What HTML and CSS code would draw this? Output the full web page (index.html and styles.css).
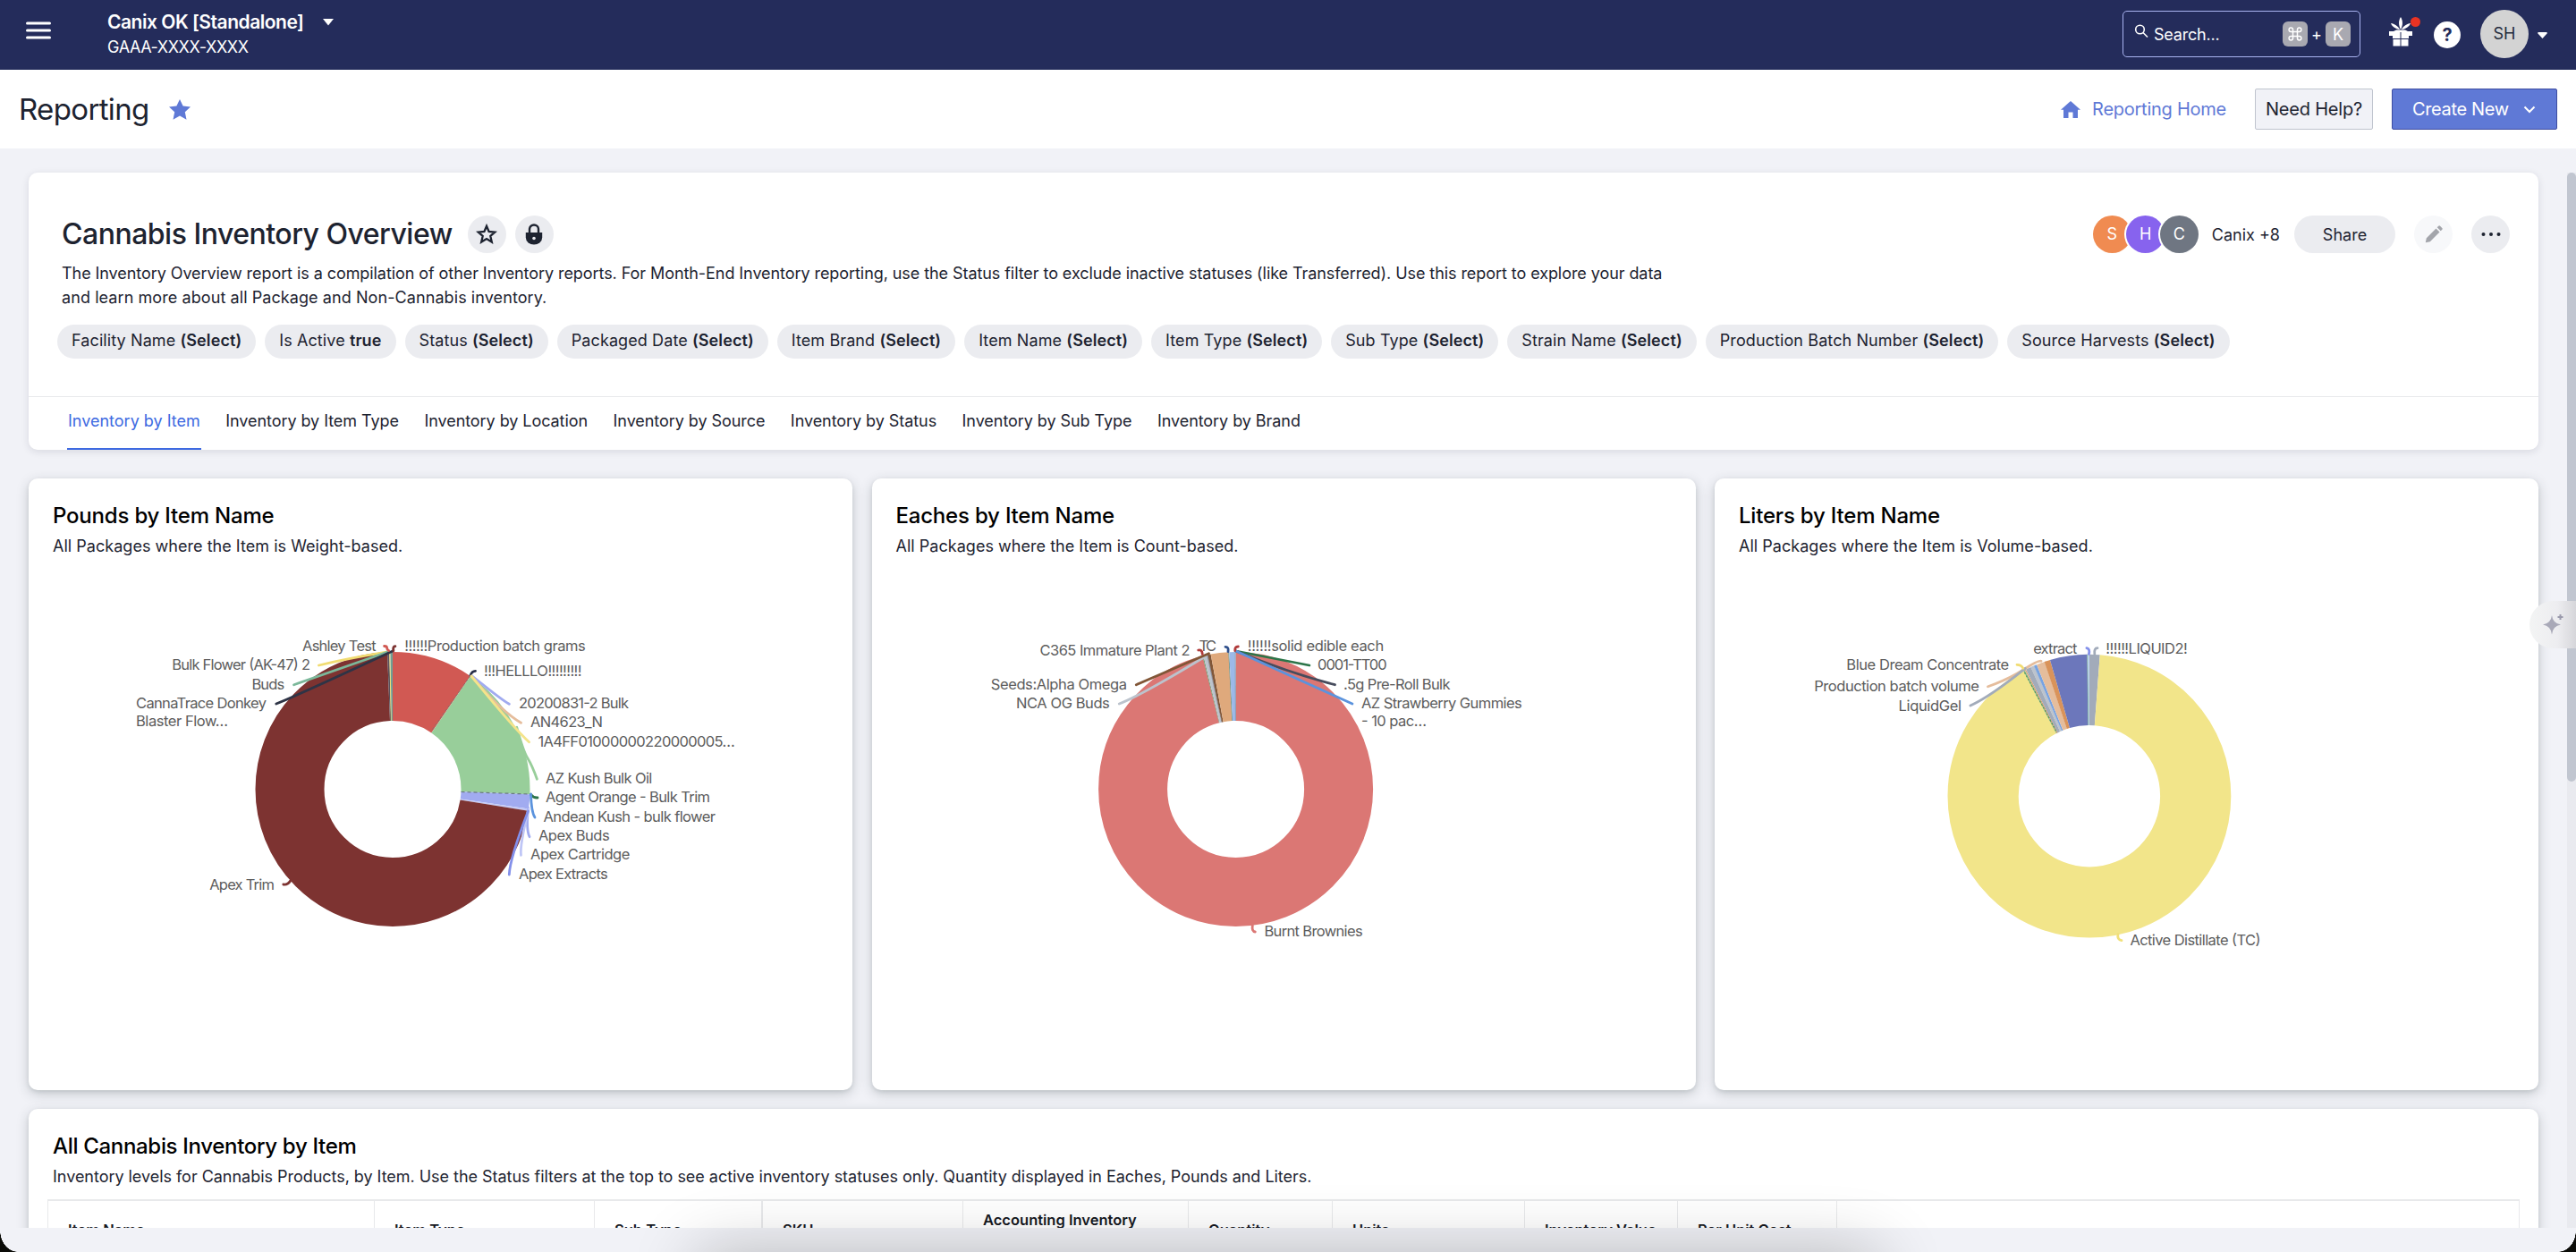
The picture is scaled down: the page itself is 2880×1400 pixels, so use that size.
FILE: index.html
```html
<!doctype html>
<html lang="en">

<head>
	<meta charset="UTF-8" />
	<meta name="viewport" content="width=device-width, initial-scale=1.0" />
	<title>Reporting</title>
	<link rel="stylesheet" href="styles.css">
</head>

<body>
	<header class="topbar">
		<svg class="menu-icon" width="28" height="20" viewBox="0 0 28 20">
			<path d="M1.5 2h25M1.5 10h25M1.5 18h25" stroke="#fff" stroke-width="3" stroke-linecap="round" />
		</svg>
		<div class="facility">
			<div class="facility-name">
				<span>Canix OK [Standalone]</span>
				<svg width="12" height="8" viewBox="0 0 12 8"><path d="M0 0h12L6 7.500z" fill="#fff" /></svg>
			</div>
			<div class="facility-license">GAAA-XXXX-XXXX</div>
		</div>
		<div class="search">
			<svg class="search-icon" width="16" height="16" viewBox="0 0 16 16" fill="none" stroke="#fff" stroke-width="1.600">
				<circle cx="6.500" cy="6" r="4.800" />
				<path d="M10 9.500l5 5" />
			</svg>
			<span class="search-text">Search...</span>
			<kbd>
				<svg width="16" height="16" viewBox="0 0 16 16" fill="none" stroke="#fff" stroke-width="1.500">
					<path d="M5.500 5.500h5v5h-5zM5.500 5.500V3.300a2.200 2.200 0 1 0-2.200 2.200zM10.500 5.500h2.200a2.200 2.200 0 1 0-2.200-2.200zM10.500 10.500v2.200a2.200 2.200 0 1 0 2.200-2.200zM5.500 10.500H3.300a2.200 2.200 0 1 0 2.200 2.200z" />
				</svg>
			</kbd>
			<span class="plus">+</span>
			<kbd>K</kbd>
		</div>
		<div class="gift">
			<svg width="26" height="33" viewBox="0 0 26 33" fill="#fff">
				<path d="M13 0c2.600 4 2.600 9 0 14-2.600-5-2.600-10 0-14z" />
				<path d="M2 7c4 .5 8 3 10 7-4.500-.5-8.500-3-10-7zM24 7c-4 .5-8 3-10 7 4.500-.5 8.500-3 10-7z" />
				<path d="M0 16h5l3-1.500h10l3 1.500h5v5h-4v3h-8.500v-7h-1v7H4v-3H0z" />
				<path d="M4.500 25h8v7.500h-8zM13.500 25h8v7.500h-8z" />
			</svg>
			<span class="gift-dot"></span>
		</div>
		<div class="help">?</div>
		<div class="user">SH</div>
		<svg class="user-caret" width="11" height="7" viewBox="0 0 11 7"><path d="M.8 0h9.400L11 1 5.500 7 0 1z" fill="#fff" /></svg>
	</header>

	<div class="page-header">
		<h1>Reporting</h1>
		<svg class="page-star" width="24" height="23" viewBox="0 0 24 23"><path d="M12 0l3.600 7.600 8.400 1-6.200 5.700 1.700 8.500L12 18.500l-7.500 4.300 1.700-8.500L0 8.600l8.400-1z" fill="#5f79d6" /></svg>
		<a class="home-link">
			<svg width="22" height="19" viewBox="0 0 22 19"><path d="M11 0l11 9.700h-3V19h-5.500v-6.500h-5V19H3V9.700H0z" fill="#5f79d6" /></svg>
			<span>Reporting Home</span>
		</a>
		<button class="btn btn-help">Need Help?</button>
		<button class="btn btn-create">
			<span>Create New</span>
			<svg width="14" height="9" viewBox="0 0 14 9"><path d="M1.500 1.500L7 7l5.500-5.500" fill="none" stroke="#fff" stroke-width="2" /></svg>
		</button>
	</div>

	<main>
		<section class="report-card">
			<div class="report-head">
				<h2>Cannabis Inventory Overview</h2>
				<span class="round">
					<svg width="24" height="24" viewBox="0 0 24 24"><path d="M12 2.800l2.600 6.200 6.700.6-5 4.400 1.500 6.600L12 17.100l-5.800 3.500L7.700 14l-5-4.400 6.700-.6z" fill="none" stroke="#1d2330" stroke-width="2.300" /></svg>
				</span>
				<span class="round">
					<svg width="20" height="24" viewBox="0 0 20 24">
						<path d="M5 11V6.500a5 5 0 0 1 10 0V11" fill="none" stroke="#1d2330" stroke-width="2.400" />
						<path d="M0.800 10h18.400v5.500a9.200 8 0 0 1-18.400 0z" fill="#1d2330" />
						<circle cx="10" cy="16.500" r="1.800" fill="#ebecf0" />
					</svg>
				</span>
				<div class="report-actions">
					<div class="people">
						<span class="person person-s">S</span>
						<span class="person person-h">H</span>
						<span class="person person-c">C</span>
					</div>
					<span class="people-more">Canix +8</span>
					<button class="share">Share</button>
					<span class="round disabled">
						<svg width="20" height="20" viewBox="0 0 20 20" fill="#a3a5ab"><path d="M.8 19.200l1-5L12.500 3.500l4 4L5.800 18.200zM13.700 2.300l1.600-1.600q.9-.8 1.800 0l2.200 2.200q.8.900 0 1.800l-1.600 1.600z" /></svg>
					</span>
					<span class="round">
						<svg width="22" height="6" viewBox="0 0 22 6" fill="#1d2330"><circle cx="2.500" cy="3" r="2" /><circle cx="11" cy="3" r="2" /><circle cx="19.500" cy="3" r="2" /></svg>
					</span>
				</div>
			</div>
			<p class="report-desc">The Inventory Overview report is a compilation of other Inventory reports. For Month-End Inventory reporting, use the Status filter to exclude inactive statuses (like Transferred). Use this report to explore your data<br><span>and learn more about all Package and Non-Cannabis inventory.</span></p>
			<div class="filters">
				<span class="pill">Facility Name <b>(Select)</b></span>
				<span class="pill">Is Active <b>true</b></span>
				<span class="pill">Status <b>(Select)</b></span>
				<span class="pill">Packaged Date <b>(Select)</b></span>
				<span class="pill">Item Brand <b>(Select)</b></span>
				<span class="pill">Item Name <b>(Select)</b></span>
				<span class="pill">Item Type <b>(Select)</b></span>
				<span class="pill">Sub Type <b>(Select)</b></span>
				<span class="pill">Strain Name <b>(Select)</b></span>
				<span class="pill">Production Batch Number <b>(Select)</b></span>
				<span class="pill">Source Harvests <b>(Select)</b></span>
			</div>
			<nav class="tabs">
				<a class="tab active">Inventory by Item</a>
				<a class="tab">Inventory by Item Type</a>
				<a class="tab">Inventory by Location</a>
				<a class="tab">Inventory by Source</a>
				<a class="tab">Inventory by Status</a>
				<a class="tab">Inventory by Sub Type</a>
				<a class="tab">Inventory by Brand</a>
			</nav>
		</section>

		<div class="charts">
			<section class="card chart-card">
				<h3>Pounds by Item Name</h3>
				<p>All Packages where the Item is Weight-based.</p>
				<svg class="chart" viewBox="32 640 921 579">
					<g class="ring" transform="rotate(-90 439 882.500)">
						<circle cx="439" cy="882.500" r="115" pathLength="360" stroke="#d15953" stroke-dasharray="34.500 360" />
						<circle cx="439" cy="882.500" r="115" pathLength="360" stroke="#98ce9a" stroke-dasharray="57.700 360" stroke-dashoffset="-34.500" />
						<circle cx="439" cy="882.500" r="115" pathLength="360" stroke="#a1abf0" stroke-dasharray="6.100 360" stroke-dashoffset="-92.200" />
						<circle cx="439" cy="882.500" r="115" pathLength="360" stroke="#c3c9f6" stroke-dasharray="0.800 360" stroke-dashoffset="-98.300" />
						<circle cx="439" cy="882.500" r="115" pathLength="360" stroke="#7d3331" stroke-dasharray="258.600 360" stroke-dashoffset="-99.100" />
						<circle cx="439" cy="882.500" r="115" pathLength="360" stroke="#59525c" stroke-dasharray="0.900 360" stroke-dashoffset="-357.700" />
						<circle cx="439" cy="882.500" r="115" pathLength="360" stroke="#f1dc72" stroke-dasharray="0.500 360" stroke-dashoffset="-358.500" />
						<circle cx="439" cy="882.500" r="115" pathLength="360" stroke="#6f9f94" stroke-dasharray="1 360" stroke-dashoffset="-359" />
					</g>
					<path d="M525.500 756L482 817.500" stroke="#8a6f6c" stroke-width="1" stroke-dasharray="3 2" />
					<path d="M515.500 885.500l77 2.500" stroke="#6a7a80" stroke-width="1.200" stroke-dasharray="4 3" />
					<g class="leads">
						<path d="M356.400 744Q390 736 435 728.700" stroke="#f1dc72" />
						<path d="M328.600 765.700L434 728.700" stroke="#7bb89a" />
						<path d="M308.800 787Q325 781 439 728" stroke="#2e3446" />
						<path d="M429.600 722.500q3 0 3 2t2 3" stroke="#d15953" />
						<path d="M441.900 722.700q-3 0-2 5" stroke="#7d3331" />
						<path d="M531.500 750.300q-4 0-5.600 5.200" stroke="#262c46" />
						<path d="M528 756Q560 782 569.300 787.300" stroke="#a1abf0" />
						<path d="M527 756Q560 795 582.500 808.300" stroke="#e5bd9c" />
						<path d="M577.800 813.300Q585 840 590 848T600.400 871.300" stroke="#98ce9a" />
						<path d="M527 756Q575 815 591.500 829.700" stroke="#f4e48a" />
						<path d="M593.400 888.300q3 4 7.600 3.700" stroke="#2c7549" />
						<path d="M593.500 888Q594 908 598 914" stroke="#5b93dd" />
						<path d="M590.500 903Q588 928 592 935.700" stroke="#a1abf0" />
						<path d="M591 905Q581 945 582.500 956.300" stroke="#bfc6f6" />
						<path d="M590.500 907Q570 960 569.300 978" stroke="#8390ea" />
						<path d="M324.800 984.700q-3 5-8 4.300" stroke="#7d3331" />
					</g>
					<g class="labels">
						<text x="338" y="728" textLength="82.600">Ashley Test</text>
						<text x="452.200" y="728" textLength="202.500">!!!!!!Production batch grams</text>
						<text x="541" y="756" textLength="109.500">!!!HELLLO!!!!!!!!!</text>
						<text x="192.200" y="749" textLength="154.800">Bulk Flower (AK-47) 2</text>
						<text x="281.400" y="771" textLength="36.800">Buds</text>
						<text x="152" y="792" textLength="146">CannaTrace Donkey</text>
						<text x="152" y="812" textLength="103">Blaster Flow…</text>
						<text x="580" y="792" textLength="123">20200831-2 Bulk</text>
						<text x="593" y="813" textLength="81">AN4623_N</text>
						<text x="601.400" y="835" textLength="220.400">1A4FF01000000220000005…</text>
						<text x="610" y="876" textLength="119.300">AZ Kush Bulk Oil</text>
						<text x="610" y="897" textLength="184">Agent Orange - Bulk Trim</text>
						<text x="607.500" y="919" textLength="192.500">Andean Kush - bulk flower</text>
						<text x="602" y="940" textLength="79.600">Apex Buds</text>
						<text x="593" y="961" textLength="111.300">Apex Cartridge</text>
						<text x="580" y="983" textLength="99.700">Apex Extracts</text>
						<text x="234.200" y="995" textLength="72.800">Apex Trim</text>
					</g>
				</svg>
			</section>

			<section class="card chart-card">
				<h3>Eaches by Item Name</h3>
				<p>All Packages where the Item is Count-based.</p>
				<svg class="chart" viewBox="975 640 921 579">
					<g class="ring" transform="rotate(-90 1381.600 882.500)">
						<circle cx="1381.600" cy="882.500" r="115" pathLength="360" stroke="#db7774" stroke-dasharray="346 360" />
						<circle cx="1381.600" cy="882.500" r="115" pathLength="360" stroke="#7fa37f" stroke-dasharray="0.500 360" stroke-dashoffset="-345.900" />
						<circle cx="1381.600" cy="882.500" r="115" pathLength="360" stroke="#bcc3cd" stroke-dasharray="1.500 360" stroke-dashoffset="-346.400" />
						<circle cx="1381.600" cy="882.500" r="115" pathLength="360" stroke="#8f8f98" stroke-dasharray="0.700 360" stroke-dashoffset="-347.800" />
						<circle cx="1381.600" cy="882.500" r="115" pathLength="360" stroke="#815637" stroke-dasharray="1.200 360" stroke-dashoffset="-348.300" />
						<circle cx="1381.600" cy="882.500" r="115" pathLength="360" stroke="#dfa97c" stroke-dasharray="7.400 360" stroke-dashoffset="-349.500" />
						<circle cx="1381.600" cy="882.500" r="115" pathLength="360" stroke="#5f8c80" stroke-dasharray="0.400 360" stroke-dashoffset="-356.800" />
						<circle cx="1381.600" cy="882.500" r="115" pathLength="360" stroke="#9cb9e8" stroke-dasharray="2.500 360" stroke-dashoffset="-357.200" />
						<circle cx="1381.600" cy="882.500" r="115" pathLength="360" stroke="#6f8fa8" stroke-dasharray="0.400 360" stroke-dashoffset="-359.600" />
					</g>
					<g class="leads">
						<path d="M1251.300 787Q1275 778 1346 735" stroke="#bcc3cd" />
						<path d="M1270.300 765.700L1351.500 730.700" stroke="#815637" />
						<path d="M1381.800 728L1463.900 744" stroke="#2c7549" />
						<path d="M1381.800 728Q1440 752 1492.500 765.700" stroke="#474c5d" />
						<path d="M1381.800 728L1511.900 787" stroke="#5b93dd" />
						<path d="M1339.700 727q4-1 4.600 4.300" stroke="#b03a3a" />
						<path d="M1370 723.300q4 0 3 5.400" stroke="#30508c" />
						<path d="M1384.300 723q-4 0-3.500 4.500" stroke="#b03a3a" />
						<path d="M1400.300 1034.700q-1 7 3 7.300" stroke="#db7774" />
					</g>
					<g class="labels">
						<text x="1162.500" y="733" textLength="168">C365 Immature Plant 2</text>
						<text x="1340.500" y="728" textLength="19.500">TC</text>
						<text x="1394.800" y="728" textLength="152.400">!!!!!!solid edible each</text>
						<text x="1473" y="749" textLength="77.600">0001-TT00</text>
						<text x="1502" y="771" textLength="119.500">.5g Pre-Roll Bulk</text>
						<text x="1522" y="792" textLength="179.700">AZ Strawberry Gummies</text>
						<text x="1522" y="812" textLength="73">- 10 pac…</text>
						<text x="1107.800" y="771" textLength="152.200">Seeds:Alpha Omega</text>
						<text x="1136" y="792" textLength="104.800">NCA OG Buds</text>
						<text x="1413.400" y="1047" textLength="110.200">Burnt Brownies</text>
					</g>
				</svg>
			</section>

			<section class="card chart-card">
				<h3>Liters by Item Name</h3>
				<p>All Packages where the Item is Volume-based.</p>
				<svg class="chart" viewBox="1917 640 921 579">
					<g class="ring wide" transform="rotate(-90 2335.900 890.200)">
						<circle cx="2335.900" cy="890.200" r="118.800" pathLength="360" stroke="#a2abba" stroke-dasharray="4.300 360" />
						<circle cx="2335.900" cy="890.200" r="118.800" pathLength="360" stroke="#f2e58a" stroke-dasharray="328 360" stroke-dashoffset="-4.300" />
						<circle cx="2335.900" cy="890.200" r="118.800" pathLength="360" stroke="#8fb98a" stroke-dasharray="0.700 360" stroke-dashoffset="-332.200" />
						<circle cx="2335.900" cy="890.200" r="118.800" pathLength="360" stroke="#d9935a" stroke-dasharray="0.500 360" stroke-dashoffset="-332.900" />
						<circle cx="2335.900" cy="890.200" r="118.800" pathLength="360" stroke="#a2abba" stroke-dasharray="2.200 360" stroke-dashoffset="-333.400" />
						<circle cx="2335.900" cy="890.200" r="118.800" pathLength="360" stroke="#bcc3cd" stroke-dasharray="1.600 360" stroke-dashoffset="-335.500" />
						<circle cx="2335.900" cy="890.200" r="118.800" pathLength="360" stroke="#77a3e2" stroke-dasharray="1.200 360" stroke-dashoffset="-337" />
						<circle cx="2335.900" cy="890.200" r="118.800" pathLength="360" stroke="#e5bd9c" stroke-dasharray="3.400 360" stroke-dashoffset="-338.200" />
						<circle cx="2335.900" cy="890.200" r="118.800" pathLength="360" stroke="#d9935a" stroke-dasharray="2.400 360" stroke-dashoffset="-341.500" />
						<circle cx="2335.900" cy="890.200" r="118.800" pathLength="360" stroke="#6c77bb" stroke-dasharray="15.300 360" stroke-dashoffset="-343.900" />
						<circle cx="2335.900" cy="890.200" r="118.800" pathLength="360" stroke="#8cbf9b" stroke-dasharray="0.500 360" stroke-dashoffset="-359" />
						<circle cx="2335.900" cy="890.200" r="118.800" pathLength="360" stroke="#b3cdee" stroke-dasharray="0.600 360" stroke-dashoffset="-359.400" />
					</g>
					<path d="M2263.500 752L2299 818" stroke="#4f9a5e" stroke-width="1.200" stroke-dasharray="2 2" />
					<g class="leads">
						<path d="M2222.500 767.700Q2245 760 2262 749T2282 739.300" stroke="#e5bd9c" />
						<path d="M2202.900 789Q2225 779 2264.300 747.300" stroke="#a2abba" />
						<path d="M2255 743.300q5 0 6.800 4" stroke="#f1dc72" />
						<path d="M2332.900 724.700q4 1 2.500 6.600" stroke="#8390ea" />
						<path d="M2345 724.700q-4 0-3.200 6.600" stroke="#a2abba" />
						<path d="M2367.900 1044.700q-1 6 4.100 7" stroke="#f1e07a" />
					</g>
					<g class="labels">
						<text x="2273.200" y="731" textLength="49.300">extract</text>
						<text x="2354.300" y="731" textLength="91.400">!!!!!!LIQUID2!</text>
						<text x="2064.300" y="749" textLength="181.900">Blue Dream Concentrate</text>
						<text x="2028.200" y="773" textLength="184.700">Production batch volume</text>
						<text x="2122.500" y="795" textLength="70.400">LiquidGel</text>
						<text x="2381.400" y="1057" textLength="146.100">Active Distillate (TC)</text>
					</g>
				</svg>
			</section>
		</div>

		<section class="card table-card">
			<h3>All Cannabis Inventory by Item</h3>
			<p>Inventory levels for Cannabis Products, by Item. Use the Status filters at the top to see active inventory statuses only. Quantity displayed in Eaches, Pounds and Liters.</p>
			<div class="table">
				<div class="th">Item Name</div>
				<div class="th">Item Type</div>
				<div class="th pinned">Sub Type</div>
				<div class="th">SKU</div>
				<div class="th">Accounting Inventory Name</div>
				<div class="th">Quantity</div>
				<div class="th">Units</div>
				<div class="th">Inventory Value</div>
				<div class="th">Per Unit Cost</div>
				<div class="th"></div>
			</div>
		</section>
	</main>

	<div class="scrollbar"><div class="thumb"></div></div>
	<div class="assistant">
		<svg width="24" height="28" viewBox="0 0 24 28">
			<path d="M11 5q1 9 10 10.500-9 1.500-10 11Q10 17 1 15.500 10 14 11 5z" fill="#a9a9b8" />
			<path d="M20.500 4v6M17.500 7h6" stroke="#9a9aac" stroke-width="2" />
		</svg>
	</div>
	<div class="corner left"></div>
	<div class="corner right"></div>
	<div class="dock-shadow"></div>
</body>

</html>
```
FILE: styles.css
```css
* {
	margin: 0;
	padding: 0;
	box-sizing: border-box;
}

body {
	position: relative;
	width: 2880px;
	height: 1400px;
	overflow: hidden;
	background-color: #f1f2f7;
	font-family: Inter, "Liberation Sans", sans-serif;
	font-size: 18px;
	color: #1d2330;
}

svg {
	display: block;
	flex: none;
}

button {
	font: inherit;
	color: inherit;
	border: none;
}

/* top bar */
.topbar {
	height: 78px;
	background-color: #242c5b;
	color: #fff;
	display: flex;
	align-items: center;
	padding: 0 32px 0 29px;
}

.menu-icon {
	margin-top: -10px;
}

.facility {
	margin-left: 63px;
}

.facility-name {
	display: flex;
	align-items: center;
	gap: 22px;
	font-size: 21px;
	font-weight: 600;
	line-height: 28px;
	letter-spacing: -0.48px;
}

.facility-license {
	font-size: 18px;
	line-height: 28px;
	letter-spacing: -0.4px;
}

.search {
	margin-left: auto;
	width: 266px;
	height: 52px;
	margin-top: -2px;
	border: 1px solid #a9b3f0;
	border-radius: 5px;
	display: flex;
	align-items: center;
	padding: 0 10px 0 12px;
}

.search-icon {
	margin-top: -7px;
}

.search-text {
	margin-left: 6px;
	flex: 1;
	letter-spacing: -0.2px;
}

kbd {
	width: 28px;
	height: 28px;
	border-radius: 6px;
	background-color: #a9a9b1;
	display: flex;
	align-items: center;
	justify-content: center;
	font: inherit;
}

.plus {
	width: 20px;
	text-align: center;
}

.gift {
	position: relative;
	margin: -8px 24px 0 32px;
}

.gift-dot {
	position: absolute;
	left: 24px;
	top: 0;
	width: 11px;
	height: 11px;
	border-radius: 50%;
	background-color: #ea3323;
}

.help {
	width: 30px;
	height: 30px;
	border-radius: 50%;
	background-color: #fff;
	color: #242c5b;
	font-weight: 700;
	font-size: 20px;
	line-height: 30px;
	text-align: center;
}

.user {
	width: 54px;
	height: 54px;
	margin: -2px 10px 0 22px;
	border-radius: 50%;
	background-color: #d3d3d3;
	color: #242c3d;
	line-height: 54px;
	text-align: center;
}

/* page header */
.page-header {
	height: 88px;
	background-color: #fff;
	display: flex;
	align-items: center;
	padding: 0 21px;
}

h1 {
	font-size: 33px;
	font-weight: 400;
	letter-spacing: -0.65px;
}

.page-star {
	margin-left: 22px;
}

.home-link {
	margin-left: auto;
	display: flex;
	align-items: center;
	gap: 13px;
	color: #5f79d6;
	font-size: 20px;
	letter-spacing: -0.25px;
}

.btn {
	height: 46px;
	border-radius: 2px;
	font-size: 20px;
	letter-spacing: -0.2px;
}

.btn-help {
	width: 132px;
	margin-left: 32px;
	background-color: #f1f2f7;
	border: 1px solid #bfc4ce;
}

.btn-create {
	width: 185px;
	margin-left: 21px;
	background-color: #5f79d6;
	border: 1px solid #3d4ca0;
	color: #fff;
	display: flex;
	align-items: center;
	justify-content: space-between;
	padding: 0 23px 0 22px;
	letter-spacing: -0.35px;
}

/* report */
main {
	height: 1207px;
	overflow: hidden;
	padding: 27px 42px 0 32px;
}

.report-card {
	height: 310px;
	background-color: #fff;
	border-radius: 10px;
	box-shadow: 0 2px 8px rgba(30, 35, 60, 0.12);
}

.report-head {
	height: 90px;
	padding: 48px 32px 0 37px;
	display: flex;
	align-items: center;
}

h2 {
	font-size: 32px;
	font-weight: 500;
	line-height: 42px;
	margin-right: 17px;
	letter-spacing: -0.5px;
}

.round {
	width: 43px;
	height: 42px;
	border-radius: 50%;
	background-color: #ebecf0;
	display: flex;
	align-items: center;
	justify-content: center;
	margin-right: 10px;
}

.report-actions {
	margin-left: auto;
	display: flex;
	align-items: center;
}

.report-actions .round {
	margin: 0 0 0 21px;
}

.round.disabled {
	background-color: #f7f8fa;
}

.people {
	display: flex;
	color: #fff;
	text-align: center;
	line-height: 42px;
}

.person {
	width: 43px;
	height: 42px;
	border-radius: 50%;
	margin-right: -5.500px;
	box-shadow: 0 0 0 2px #fff;
}

.person-s {
	background-color: #f08b51;
}

.person-h {
	background-color: #8763ee;
}

.person-c {
	background-color: #6f7682;
	margin-right: 15px;
}

.share {
	width: 113px;
	height: 42px;
	margin-left: 16px;
	border-radius: 21px;
	background-color: #ebecf0;
}

.report-desc {
	padding: 9px 37px 0;
	line-height: 27px;
	letter-spacing: -0.068px;
}

.report-desc span {
	letter-spacing: 0.08px;
}

.filters {
	display: flex;
	gap: 10px;
	padding: 17px 32px 0;
}

.pill {
	height: 38px;
	line-height: 36px;
	padding: 0 16px;
	border-radius: 19px;
	background-color: #ebecf0;
	white-space: nowrap;
	letter-spacing: 0.1px;
}

.pill b {
	font-weight: 600;
}

.tabs {
	margin-top: 42px;
	height: 60px;
	border-top: 1px solid #e8e9ec;
	padding-left: 43px;
	display: flex;
	gap: 26.500px;
}

.tab {
	height: 59px;
	line-height: 54px;
	padding: 0 1px;
	letter-spacing: -0.06px;
}

.tab.active {
	color: #3e6ae1;
	border-bottom: 2px solid #3e6ae1;
	letter-spacing: 0;
}

/* cards */
.card {
	background-color: #fff;
	border-radius: 10px;
	box-shadow: 0 4px 14px rgba(40, 55, 60, 0.22), 0 2px 4px rgba(40, 60, 60, 0.1);
}

.card h3 {
	font-size: 24px;
	font-weight: 500;
	line-height: 30px;
	color: #000;
	letter-spacing: -0.2px;
}

.charts {
	display: grid;
	grid-template-columns: repeat(3, 921px);
	column-gap: 21.500px;
	margin-top: 32px;
}

.chart-card {
	height: 684px;
}

.chart-card h3 {
	padding: 27px 27px 0;
}

.chart-card p {
	padding: 6px 27px 0;
	line-height: 26px;
	letter-spacing: 0.03px;
}

.chart {
	width: 921px;
	height: 579px;
	margin-top: 16px;
}

.ring circle {
	fill: none;
	stroke-width: 77px;
}

.ring.wide circle {
	stroke-width: 79.200px;
}

.leads path {
	fill: none;
	stroke-width: 2.800px;
	stroke-linecap: round;
}

.labels text {
	font-size: 16.500px;
	fill: #5c5c5c;
}

.table-card {
	margin-top: 21px;
	height: 400px;
	padding: 27px 21px 0;
}

.table-card h3 {
	padding-left: 6px;
	letter-spacing: -0.32px;
}

.table-card p {
	padding: 6px 6px 0;
	line-height: 26px;
	letter-spacing: -0.03px;
}

.table {
	margin-top: 12px;
	height: 300px;
	border: 1px solid #e8e9eb;
	border-width: 2px 1px 0;
	display: grid;
	grid-template-columns: 365px 246px 188px 224px 252px 161px 215px 171px 178px 1fr;
}

.th {
	height: 63px;
	border-right: 1px solid #e8e9eb;
	padding: 0 22px;
	display: flex;
	align-items: center;
	font-size: 16.500px;
	font-weight: 600;
	line-height: 22px;
	color: #16191f;
}

.th.pinned {
	border-right-width: 2px;
}

.th:last-child {
	border-right: none;
}

/* things lying over the page */
.scrollbar {
	position: absolute;
	right: 0;
	top: 193px;
	width: 10px;
	height: 1180px;
	background-color: #e9eaef;
}

.thumb {
	height: 681px;
	border-radius: 5px;
	background-color: #c1c6d0;
}

.assistant {
	position: absolute;
	right: 0;
	top: 672px;
	width: 52px;
	height: 53px;
	border-radius: 27px 0 0 27px;
	background: linear-gradient(90deg, #f3f4f4, #ededf0 60%, #d6d6da);
	padding: 11px 0 0 14px;
}

.corner {
	position: absolute;
	bottom: 0;
	width: 20px;
	height: 24px;
}

.corner.left {
	left: 0;
	background: radial-gradient(ellipse 20px 24px at 100% 0, transparent 98%, #0b0c08);
}

.corner.right {
	right: 0;
	background: radial-gradient(ellipse 20px 24px at 0 0, transparent 98%, #0b0c08);
}

.dock-shadow {
	position: absolute;
	left: 780px;
	top: 1400px;
	width: 1320px;
	height: 100px;
	box-shadow: 0 0 74px rgba(0, 0, 0, 0.24);
}
```
